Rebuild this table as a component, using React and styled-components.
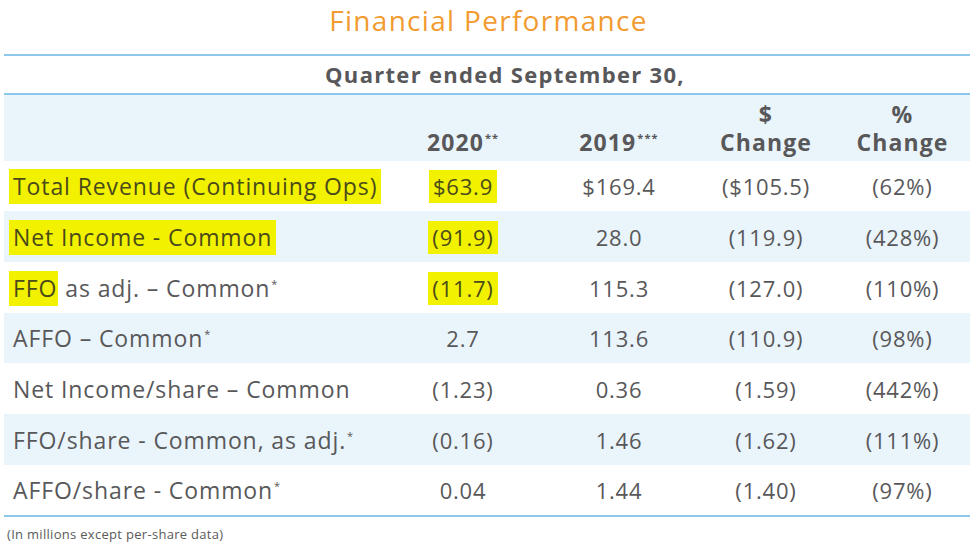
import React from "react";
import styled, { createGlobalStyle } from "styled-components";

const Global = createGlobalStyle`
  html, body { margin: 0; padding: 0; background: #fff; }
  body { font-family: "Open Sans", "Liberation Sans", sans-serif; color: #58585a; }
`;

const Page = styled.div`
  width: 977px;
  height: 546px;
  overflow: hidden;
  display: flex;
  flex-direction: column;
`;

const Title = styled.h1`
  margin: 0;
  height: 40px;
  line-height: 40px;
  margin-bottom: 14px;
  text-align: center;
  font-size: 28px;
  font-weight: 500;
  color: #f29b30;
  letter-spacing: 1.3px;
`;

const Table = styled.div`
  margin-left: 4px;
  width: 966px;
  border-top: 2px solid #8cc8ea;
  border-bottom: 2px solid #8cc8ea;
  display: flex;
  flex-direction: column;
`;

const QuarterRow = styled.div`
  height: 37px;
  line-height: 37px;
  padding-left: 36px;
  text-align: center;
  font-size: 22px;
  font-weight: 700;
  letter-spacing: 1.3px;
  border-bottom: 2px solid #8cc8ea;
`;

const Row = styled.div`
  display: grid;
  grid-template-columns: 391px 136px 176px 118px 145px;
  align-items: center;
  height: ${(p) => p.$h}px;
  background: ${(p) => (p.$shaded ? "#eaf4fb" : "#ffffff")};
`;

const HeadCell = styled.div`
  text-align: center;
  font-size: 23px;
  font-weight: 700;
  line-height: 28px;
  letter-spacing: 1.1px;
  padding-left: ${(p) => p.$pl || 0}px;
  align-self: end;
  padding-bottom: 5px;
`;

const LabelCell = styled.div`
  padding-left: 9px;
  font-size: 23px;
  font-weight: 500;
  letter-spacing: 0.9px;
  white-space: nowrap;
`;

const ValueCell = styled.div`
  text-align: center;
  font-size: 22px;
  font-weight: 500;
  letter-spacing: 0.8px;
  padding-left: ${(p) => p.$pl || 0}px;
  white-space: nowrap;
`;

const Mark = styled.span`
  background: #f2f200;
  color: #4a4a1a;
  padding: 1px ${(p) => (p.$pr == null ? 4 : p.$pr)}px 2px 4px;
  margin-left: ${(p) => p.$ml || 0}px;
`;

const Star = styled.sup`
  font-size: 11px;
  line-height: 0;
  vertical-align: 9px;
  margin-left: 1px;
`;

const Note = styled.div`
  margin-top: 8px;
  padding-left: 7px;
  font-size: 13px;
  letter-spacing: 0.3px;
  color: #5a5a5a;
`;

const heights = [50, 51, 51, 50, 51, 51, 50];

const rows = [
  { label: <Mark $ml={-4}>Total Revenue (Continuing Ops)</Mark>, v: [<Mark>$63.9</Mark>, "$169.4", "($105.5)", "(62%)"] },
  { label: <Mark $ml={-4}>Net Income - Common</Mark>, v: [<Mark>(91.9)</Mark>, "28.0", "(119.9)", "(428%)"] },
  { label: <><Mark $ml={-4} $pr={1}>FFO</Mark> as adj. – Common<Star>*</Star></>, v: [<Mark>(11.7)</Mark>, "115.3", "(127.0)", "(110%)"] },
  { label: <>AFFO – Common<Star>*</Star></>, v: ["2.7", "113.6", "(110.9)", "(98%)"] },
  { label: <>Net Income/share – Common</>, v: ["(1.23)", "0.36", "(1.59)", "(442%)"] },
  { label: <>FFO/share - Common, as adj.<Star>*</Star></>, v: ["(0.16)", "1.46", "(1.62)", "(111%)"] },
  { label: <>AFFO/share - Common<Star>*</Star></>, v: ["0.04", "1.44", "(1.40)", "(97%)"] },
];

export default function App() {
  return (
    <Page>
      <Global />
      <Title>Financial Performance</Title>
      <Table>
        <QuarterRow>Quarter ended September 30,</QuarterRow>
        <Row $h={66} $shaded>
          <div />
          <HeadCell>2020<Star>**</Star></HeadCell>
          <HeadCell>2019<Star>***</Star></HeadCell>
          <HeadCell>$<br />Change</HeadCell>
          <HeadCell $pl={10}>%<br />Change</HeadCell>
        </Row>
        {rows.map((r, i) => (
          <Row key={i} $h={heights[i]} $shaded={i % 2 === 1}>
            <LabelCell>{r.label}</LabelCell>
            {r.v.map((v, j) => (
              <ValueCell key={j} $pl={j === 3 ? 10 : 0}>{v}</ValueCell>
            ))}
          </Row>
        ))}
      </Table>
      <Note>(In millions except per-share data)</Note>
    </Page>
  );
}
